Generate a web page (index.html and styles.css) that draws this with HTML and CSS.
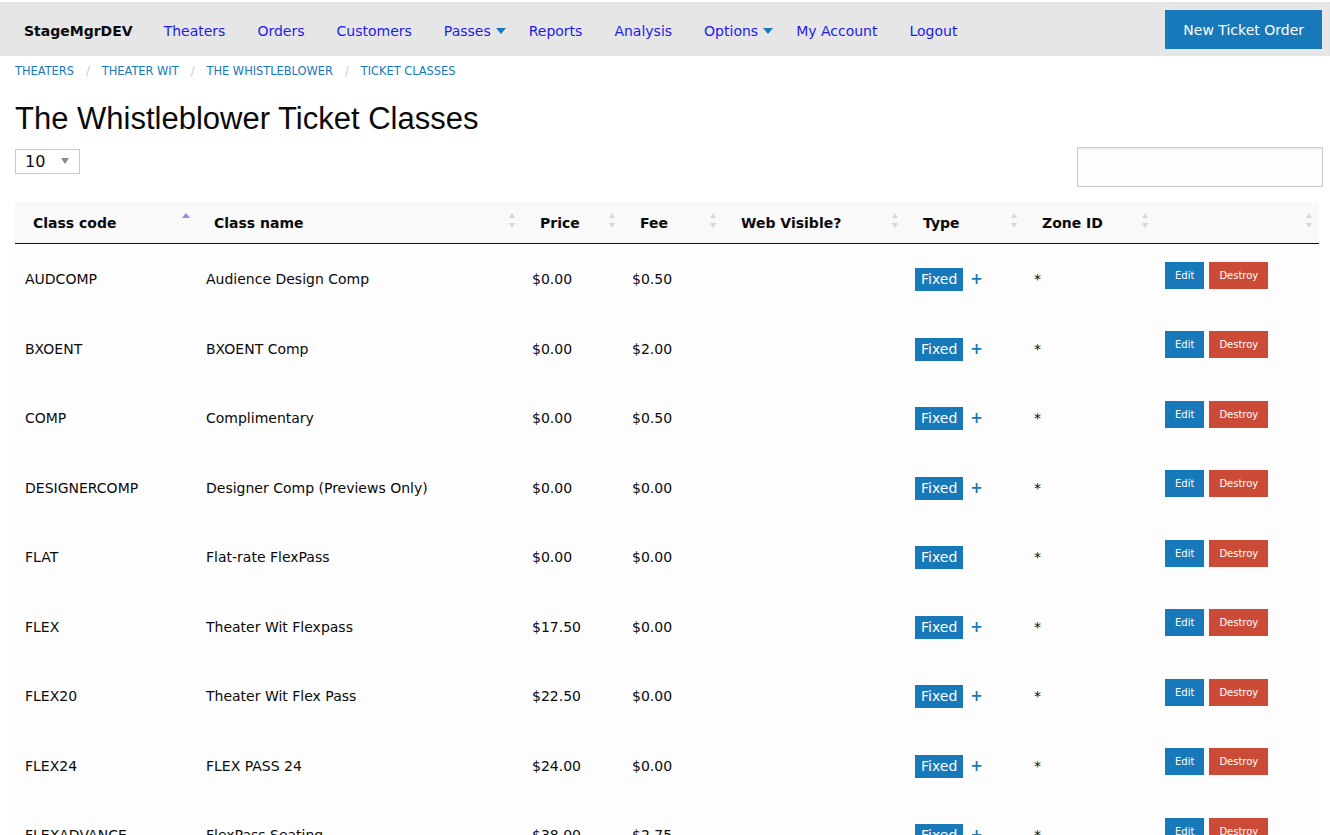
FILE: index.html
```html
<!DOCTYPE html>
<html>
    <head>
        <meta charset="utf-8">
        <title>Ticket Classes</title>
        <link rel="stylesheet" href="styles.css">
    </head>

    <body>
        <nav class="top-bar">
            <div class="top-left">
                <span class="brand">StageMgrDEV</span>
                <ul class="menu">
                    <li><a href="#">Theaters</a></li>
                    <li><a href="#">Orders</a></li>
                    <li><a href="#">Customers</a></li>
                    <li><a href="#" class="drop">Passes<span class="arrow"></span></a></li>
                    <li><a href="#">Reports</a></li>
                    <li><a href="#">Analysis</a></li>
                    <li><a href="#" class="drop">Options<span class="arrow"></span></a></li>
                    <li><a href="#">My Account</a></li>
                    <li><a href="#">Logout</a></li>
                </ul>
            </div>
            <a href="#" class="button new-order">New Ticket Order</a>
        </nav>

        <div class="page">
            <ul class="breadcrumbs">
                <li><a href="#">Theaters</a></li>
                <li class="sep">/</li>
                <li><a href="#">Theater Wit</a></li>
                <li class="sep">/</li>
                <li><a href="#">The Whistleblower</a></li>
                <li class="sep">/</li>
                <li><a href="#">Ticket Classes</a></li>
            </ul>

            <h1 class="title">The Whistleblower Ticket Classes</h1>

            <div class="controls">
                <div class="length">
                    <span>10</span>
                    <svg width="8" height="6" viewBox="0 0 8 6"><path d="M0 0 L8 0 L4 6 Z" fill="#8a8a8a"/></svg>
                </div>
                <input type="text" class="search">
            </div>

            <table class="data">
                <colgroup>
                    <col class="w-code">
                    <col class="w-name">
                    <col class="w-price">
                    <col class="w-fee">
                    <col class="w-web">
                    <col class="w-type">
                    <col class="w-zone">
                    <col class="w-act">
                </colgroup>
                <thead>
                    <tr>
                        <th><div class="th-in">Class code<svg class="sort" width="8" height="16" viewBox="0 0 8 16"><path d="M0 5 L8 5 L4 0 Z" fill="#8c8ce0"/></svg></div></th>
                        <th><div class="th-in">Class name<svg class="sort" width="8" height="16" viewBox="0 0 8 16"><path d="M1 5 L7 5 L4 0 Z M1 10 L7 10 L4 15 Z" fill="#d6d6d6"/></svg></div></th>
                        <th><div class="th-in">Price<svg class="sort" width="8" height="16" viewBox="0 0 8 16"><path d="M1 5 L7 5 L4 0 Z M1 10 L7 10 L4 15 Z" fill="#d6d6d6"/></svg></div></th>
                        <th><div class="th-in">Fee<svg class="sort" width="8" height="16" viewBox="0 0 8 16"><path d="M1 5 L7 5 L4 0 Z M1 10 L7 10 L4 15 Z" fill="#d6d6d6"/></svg></div></th>
                        <th><div class="th-in">Web Visible?<svg class="sort" width="8" height="16" viewBox="0 0 8 16"><path d="M1 5 L7 5 L4 0 Z M1 10 L7 10 L4 15 Z" fill="#d6d6d6"/></svg></div></th>
                        <th><div class="th-in">Type<svg class="sort" width="8" height="16" viewBox="0 0 8 16"><path d="M1 5 L7 5 L4 0 Z M1 10 L7 10 L4 15 Z" fill="#d6d6d6"/></svg></div></th>
                        <th><div class="th-in">Zone ID<svg class="sort" width="8" height="16" viewBox="0 0 8 16"><path d="M1 5 L7 5 L4 0 Z M1 10 L7 10 L4 15 Z" fill="#d6d6d6"/></svg></div></th>
                        <th><div class="th-in"><span></span><svg class="sort" width="8" height="16" viewBox="0 0 8 16"><path d="M1 5 L7 5 L4 0 Z M1 10 L7 10 L4 15 Z" fill="#d6d6d6"/></svg></div></th>
                    </tr>
                </thead>
                <tbody>
                    <tr>
                        <td>AUDCOMP</td><td>Audience Design Comp</td><td>$0.00</td><td>$0.50</td><td></td>
                        <td><span class="label">Fixed</span><span class="plus">+</span></td><td>*</td>
                        <td><div class="actions"><a href="#" class="btn edit">Edit</a><a href="#" class="btn destroy">Destroy</a></div></td>
                    </tr>
                    <tr>
                        <td>BXOENT</td><td>BXOENT Comp</td><td>$0.00</td><td>$2.00</td><td></td>
                        <td><span class="label">Fixed</span><span class="plus">+</span></td><td>*</td>
                        <td><div class="actions"><a href="#" class="btn edit">Edit</a><a href="#" class="btn destroy">Destroy</a></div></td>
                    </tr>
                    <tr>
                        <td>COMP</td><td>Complimentary</td><td>$0.00</td><td>$0.50</td><td></td>
                        <td><span class="label">Fixed</span><span class="plus">+</span></td><td>*</td>
                        <td><div class="actions"><a href="#" class="btn edit">Edit</a><a href="#" class="btn destroy">Destroy</a></div></td>
                    </tr>
                    <tr>
                        <td>DESIGNERCOMP</td><td>Designer Comp (Previews Only)</td><td>$0.00</td><td>$0.00</td><td></td>
                        <td><span class="label">Fixed</span><span class="plus">+</span></td><td>*</td>
                        <td><div class="actions"><a href="#" class="btn edit">Edit</a><a href="#" class="btn destroy">Destroy</a></div></td>
                    </tr>
                    <tr>
                        <td>FLAT</td><td>Flat-rate FlexPass</td><td>$0.00</td><td>$0.00</td><td></td>
                        <td><span class="label">Fixed</span></td><td>*</td>
                        <td><div class="actions"><a href="#" class="btn edit">Edit</a><a href="#" class="btn destroy">Destroy</a></div></td>
                    </tr>
                    <tr>
                        <td>FLEX</td><td>Theater Wit Flexpass</td><td>$17.50</td><td>$0.00</td><td></td>
                        <td><span class="label">Fixed</span><span class="plus">+</span></td><td>*</td>
                        <td><div class="actions"><a href="#" class="btn edit">Edit</a><a href="#" class="btn destroy">Destroy</a></div></td>
                    </tr>
                    <tr>
                        <td>FLEX20</td><td>Theater Wit Flex Pass</td><td>$22.50</td><td>$0.00</td><td></td>
                        <td><span class="label">Fixed</span><span class="plus">+</span></td><td>*</td>
                        <td><div class="actions"><a href="#" class="btn edit">Edit</a><a href="#" class="btn destroy">Destroy</a></div></td>
                    </tr>
                    <tr>
                        <td>FLEX24</td><td>FLEX PASS 24</td><td>$24.00</td><td>$0.00</td><td></td>
                        <td><span class="label">Fixed</span><span class="plus">+</span></td><td>*</td>
                        <td><div class="actions"><a href="#" class="btn edit">Edit</a><a href="#" class="btn destroy">Destroy</a></div></td>
                    </tr>
                    <tr>
                        <td>FLEXADVANCE</td><td>FlexPass Seating</td><td>$38.00</td><td>$2.75</td><td></td>
                        <td><span class="label">Fixed</span><span class="plus">+</span></td><td>*</td>
                        <td><div class="actions"><a href="#" class="btn edit">Edit</a><a href="#" class="btn destroy">Destroy</a></div></td>
                    </tr>
                </tbody>
            </table>
        </div>
    </body>
</html>
```

FILE: styles.css
```css
body
{
    margin: 0;
    padding-top: 2px;
    background: #ffffff;
    color: #0a0a0a;
    font-family: "DejaVu Sans", Verdana, sans-serif;
    font-size: 14px;
}

a
{
    text-decoration: none;
}

/* top bar */

.top-bar
{
    display: flex;
    justify-content: space-between;
    align-items: center;
    height: 54px;
    padding: 0 8px 0 24px;
    background: #e6e6e6;
}

.top-left
{
    display: flex;
    align-items: center;
    padding-top: 4px;
}

.brand
{
    font-weight: bold;
    padding-right: 15px;
}

.menu
{
    display: flex;
    list-style: none;
    margin: 0;
    padding: 0;
}

.menu a
{
    display: flex;
    align-items: center;
    padding: 0 16px;
    color: #1c1cec;
    line-height: 20px;
}

.menu a.drop
{
    padding-right: 7px;
}

.arrow
{
    display: inline-block;
    margin-left: 5px;
    border-left: 5.5px solid transparent;
    border-right: 5.5px solid transparent;
    border-top: 6px solid #1779ba;
}

.button
{
    display: flex;
    align-items: center;
    height: 39px;
    padding: 0 18px;
    margin-top: 1px;
    background: #1779ba;
    color: #fefefe;
    font-size: 14px;
}

/* page */

.page
{
    padding-left: 15px;
}

.breadcrumbs
{
    display: flex;
    list-style: none;
    margin: 8px 0 0 0;
    padding: 0;
    font-size: 11.4px;
    line-height: 15px;
    text-transform: uppercase;
}

.breadcrumbs a
{
    color: #1779ba;
}

.breadcrumbs .sep
{
    margin: 0 12px;
    color: #cacaca;
}

.title
{
    margin: 21px 0 0 0;
    font-family: "Liberation Sans", Arial, sans-serif;
    font-size: 31px;
    font-weight: normal;
    line-height: 37px;
}

.controls
{
    display: flex;
    justify-content: space-between;
    align-items: flex-start;
    width: 1308px;
    margin-top: 9.5px;
}

.length
{
    display: flex;
    align-items: center;
    justify-content: space-between;
    box-sizing: border-box;
    width: 65px;
    height: 25px;
    margin-top: 2px;
    padding: 0 10px 0 9px;
    border: 1px solid #cacaca;
    font-size: 16px;
}

.search
{
    box-sizing: border-box;
    width: 246px;
    height: 40px;
    margin: 0;
    border: 1px solid #cacaca;
    box-shadow: inset 0 1px 2px rgba(10, 10, 10, 0.1);
    background: #fefefe;
}

/* table */

.data
{
    table-layout: fixed;
    width: 1304px;
    margin-top: 15px;
    border-collapse: collapse;
    background: #fdfdfd;
}

.w-code { width: 181px; }
.w-name { width: 326px; }
.w-price { width: 100px; }
.w-fee { width: 101px; }
.w-web { width: 182px; }
.w-type { width: 119px; }
.w-zone { width: 131px; }
.w-act { width: 164px; }

.data thead
{
    background: #f9f9f9;
}

.data th
{
    padding: 11px 6px 9px 18px;
    border-bottom: 1px solid #111;
    text-align: left;
    font-weight: bold;
    line-height: 21px;
}

.th-in
{
    display: flex;
    justify-content: space-between;
    align-items: center;
}

.sort
{
    display: block;
    margin-top: -5px;
}

.data td
{
    height: 66.5px;
    padding: 3px 10px 0 10px;
    vertical-align: middle;
    line-height: 19px;
}

.label
{
    display: inline-block;
    padding: 0 6px;
    height: 23px;
    line-height: 23px;
    vertical-align: middle;
    background: #1779ba;
    color: #fefefe;
}

.plus
{
    margin-left: 7px;
    color: #1779ba;
    font-weight: bold;
    font-size: 15px;
    vertical-align: middle;
}

.actions
{
    display: flex;
    gap: 5px;
    margin-bottom: 9px;
}

.btn
{
    display: flex;
    align-items: center;
    height: 27px;
    padding: 0 10px;
    color: #fefefe;
    font-size: 10px;
}

.edit
{
    background: #1779ba;
}

.destroy
{
    background: #cc4b37;
}
```
